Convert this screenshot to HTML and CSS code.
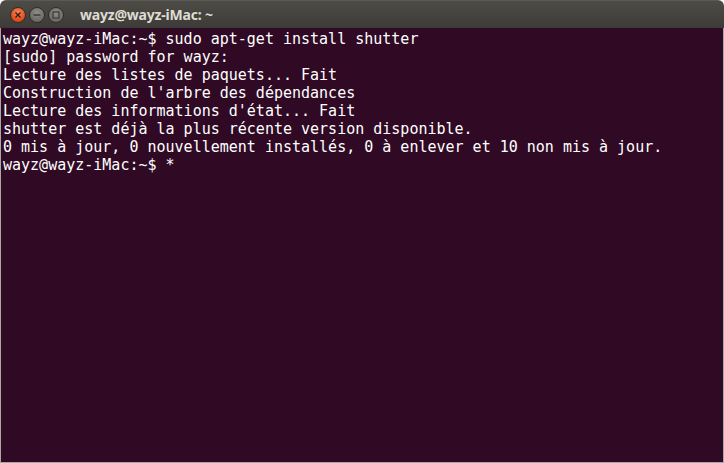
FILE: index.html
```html
<!DOCTYPE html>
<html lang="fr">
<head>
    <meta charset="UTF-8">
    <title>wayz@wayz-iMac: ~</title>
    <link rel="stylesheet" href="styles.css">
</head>
<body>
    <div class="window">
        <div class="titlebar">
            <div class="buttons">
                <span class="btn close">
                    <svg width="8" height="8" viewBox="0 0 8 8"><path d="M1.5 1.5 L6.5 6.5 M6.5 1.5 L1.5 6.5" stroke="#3a1a10" stroke-width="1.4" fill="none"/></svg>
                </span>
                <span class="btn minimize">
                    <svg width="8" height="8" viewBox="0 0 8 8"><path d="M0.5 4 L7.5 4" stroke="#3c3b37" stroke-width="1.3" fill="none"/></svg>
                </span>
                <span class="btn maximize">
                    <svg width="8" height="8" viewBox="0 0 8 8"><rect x="1" y="1" width="6" height="6" stroke="#3c3b37" stroke-width="1.2" fill="none"/></svg>
                </span>
            </div>
            <div class="title">wayz@wayz-iMac: ~</div>
        </div>
        <div class="terminal">
<pre class="output">wayz@wayz-iMac:~$ sudo apt-get install shutter
[sudo] password for wayz:
Lecture des listes de paquets... Fait
Construction de l'arbre des dépendances
Lecture des informations d'état... Fait
shutter est déjà la plus récente version disponible.
0 mis à jour, 0 nouvellement installés, 0 à enlever et 10 non mis à jour.
wayz@wayz-iMac:~$ *</pre>
        </div>
    </div>
</body>
</html>
```

FILE: styles.css
```css
html, body {
    margin: 0;
    padding: 0;
    background-color: #ffffff;
}
.window {
    width: 724px;
    height: 463px;
    display: flex;
    flex-direction: column;
    border-radius: 6px 6px 0 0;
    overflow: hidden;
}
.titlebar {
    height: 28px;
    flex: none;
    display: flex;
    align-items: center;
    background: linear-gradient(#4d4c47, #3c3b37);
    border-top: 1px solid #5a5954;
    box-sizing: border-box;
}
.buttons {
    display: flex;
    gap: 3px;
    margin-left: 10px;
    margin-top: 1px;
}
.btn {
    width: 16px;
    height: 16px;
    border-radius: 50%;
    display: flex;
    align-items: center;
    justify-content: center;
    box-sizing: border-box;
    border: 1px solid #2f2e2b;
}
.close {
    background: radial-gradient(circle at 50% 35%, #f68a5c, #dd4814 70%);
}
.minimize, .maximize {
    background: radial-gradient(circle at 50% 35%, #8f8d87, #6b6a65 70%);
}
.title {
    margin-left: 16px;
    color: #dfdbd2;
    font-family: "Noto Sans", "DejaVu Sans", sans-serif;
    font-weight: bold;
    font-size: 14px;
    letter-spacing: -0.2px;
}
.terminal {
    flex: 1;
    background-color: #300a24;
    border: 1px solid #a9a8a4;
    border-top: none;
    padding: 2px 2px;
}
.output {
    margin: 0;
    color: #ffffff;
    font-family: "DejaVu Sans Mono", monospace;
    font-size: 15px;
    line-height: 18px;
}
```
